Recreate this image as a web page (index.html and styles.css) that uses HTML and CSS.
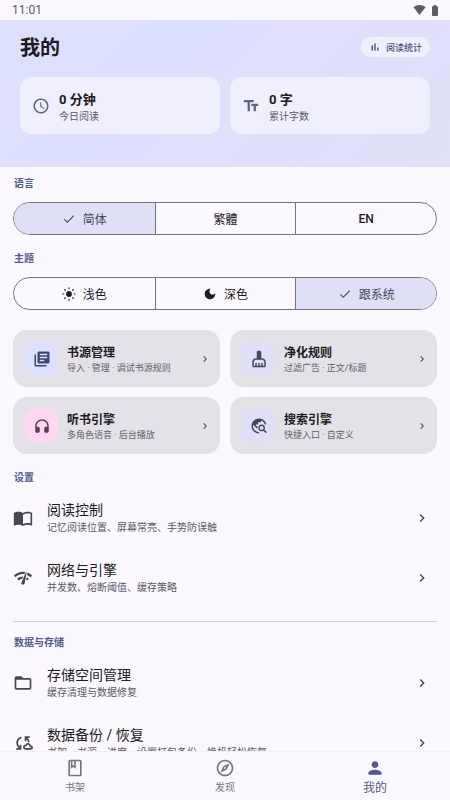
FILE: index.html
```html
<!DOCTYPE html>
<html lang="zh-CN">
<head>
<meta charset="utf-8">
<meta name="viewport" content="width=device-width, initial-scale=1">
<title>我的</title>
<link rel="stylesheet" href="styles.css">
</head>
<body>
<svg class="defs" aria-hidden="true">
  <symbol id="chevron" viewBox="0 0 24 24"><path d="M10 6 8.600 7.400l4.600 4.600-4.600 4.600L10 18l6-6z"/></symbol>
  <symbol id="check" viewBox="0 0 24 24"><path d="M9 16.170 4.830 12l-1.420 1.410L9 19 21 7l-1.410-1.410z"/></symbol>
</svg>
<div class="app">
  <div class="status">
    <span>11:01</span>
    <span class="status-icons">
      <svg class="wifi" viewBox="0 0 24 20"><path d="M12 20 0 4.500C3.500 1.700 7.500 0 12 0s8.500 1.700 12 4.500z"/></svg>
      <svg class="battery" viewBox="0 0 12 22"><path d="M3.500 0h5v2.500h2c.8 0 1.500.7 1.500 1.500v16.500c0 .8-.7 1.500-1.500 1.500h-9C.7 22 0 21.300 0 20.500V4c0-.8.7-1.500 1.500-1.500h2z"/></svg>
    </span>
  </div>

  <main class="content">
    <header class="hero">
      <div class="hero-top">
        <h1>我的</h1>
        <button class="pill" type="button">
          <svg viewBox="0 0 24 24"><path d="M5 9.200h3V19H5zM10.600 5h2.800v14h-2.800zM16.200 13H19v6h-2.800z"/></svg>
          阅读统计
        </button>
      </div>
      <div class="stats">
        <div class="stat">
          <svg viewBox="0 0 24 24"><path d="M11.990 2C6.470 2 2 6.480 2 12s4.470 10 9.990 10C17.520 22 22 17.520 22 12S17.520 2 11.990 2zM12 20c-4.420 0-8-3.580-8-8s3.580-8 8-8 8 3.580 8 8-3.580 8-8 8zm.5-13H11v6l5.250 3.150.75-1.230-4.500-2.670z"/></svg>
          <div><strong>0 分钟</strong><span>今日阅读</span></div>
        </div>
        <div class="stat">
          <svg viewBox="0 0 24 24"><path d="M2.500 4v3h5v12h3V7h5V4h-13zm19 5h-9v3h3v7h3v-7h3V9z"/></svg>
          <div><strong>0 字</strong><span>累计字数</span></div>
        </div>
      </div>
    </header>

    <section class="block">
      <h2>语言</h2>
      <div class="segments">
        <button class="selected" type="button" aria-pressed="true"><svg><use href="#check"/></svg>简体</button>
        <button type="button" lang="zh-TW">繁體</button>
        <button class="latin" type="button">EN</button>
      </div>
    </section>

    <section class="block">
      <h2>主题</h2>
      <div class="segments">
        <button type="button"><svg viewBox="0 0 24 24"><circle cx="12" cy="12" r="5"/><path class="rays" d="M12 1.500v1.500M12 21v1.500M1.500 12H3M21 12h1.500M4.600 4.600l1 1M18.400 18.400l1 1M4.600 19.400l1-1M18.400 5.600l1-1"/></svg>浅色</button>
        <button type="button"><svg viewBox="0 0 24 24"><path d="M12 3c-4.970 0-9 4.030-9 9s4.030 9 9 9 9-4.030 9-9c0-.46-.04-.92-.1-1.360-.98 1.370-2.580 2.260-4.400 2.260-2.980 0-5.400-2.420-5.400-5.400 0-1.810.89-3.420 2.260-4.400-.44-.06-.9-.1-1.360-.1z"/></svg>深色</button>
        <button class="selected" type="button" aria-pressed="true"><svg><use href="#check"/></svg>跟系统</button>
      </div>
    </section>

    <section class="cards">
      <a class="card" href="#">
        <span class="badge indigo"><svg viewBox="0 0 24 24"><path d="M4 6H2v14c0 1.100.9 2 2 2h14v-2H4V6zm16-4H8c-1.100 0-2 .9-2 2v12c0 1.100.9 2 2 2h12c1.100 0 2-.9 2-2V4c0-1.100-.9-2-2-2zm-1 9H9V9h10v2zm-4 4H9v-2h6v2zm4-8H9V5h10v2z"/></svg></span>
        <span class="card-text"><strong>书源管理</strong><span>导入 · 管理 · 调试书源规则</span></span>
        <svg class="chevron"><use href="#chevron"/></svg>
      </a>
      <a class="card" href="#">
        <span class="badge"><svg viewBox="0 0 24 24"><path d="M16 11h-1V3c0-1.100-.9-2-2-2h-2c-1.100 0-2 .9-2 2v8H8c-2.760 0-5 2.240-5 5v5c0 1.100.9 2 2 2h14c1.100 0 2-.9 2-2v-5c0-2.760-2.240-5-5-5zm3 10h-2v-3c0-.55-.45-1-1-1s-1 .45-1 1v3h-2v-3c0-.55-.45-1-1-1s-1 .45-1 1v3H9v-3c0-.55-.45-1-1-1s-1 .45-1 1v3H5v-5c0-1.650 1.350-3 3-3h8c1.650 0 3 1.350 3 3v5z"/></svg></span>
        <span class="card-text"><strong>净化规则</strong><span>过滤广告 · 正文/标题</span></span>
        <svg class="chevron"><use href="#chevron"/></svg>
      </a>
      <a class="card" href="#">
        <span class="badge pink"><svg viewBox="0 0 24 24"><path d="M12 3c-4.970 0-9 4.030-9 9v7c0 1.100.9 2 2 2h2c1.100 0 2-.9 2-2v-4c0-1.100-.9-2-2-2H5v-1c0-3.870 3.130-7 7-7s7 3.130 7 7v1h-2c-1.100 0-2 .9-2 2v4c0 1.100.9 2 2 2h2c1.100 0 2-.9 2-2v-7c0-4.970-4.030-9-9-9z"/></svg></span>
        <span class="card-text"><strong>听书引擎</strong><span>多角色语音 · 后台播放</span></span>
        <svg class="chevron"><use href="#chevron"/></svg>
      </a>
      <a class="card" href="#">
        <span class="badge"><svg viewBox="0 0 24 24"><path d="M19.300 16.900c.4-.7.7-1.500.7-2.400 0-2.500-2-4.500-4.500-4.500S11 12 11 14.500s2 4.500 4.500 4.500c.9 0 1.700-.3 2.400-.7l3.200 3.200 1.400-1.400-3.200-3.200zm-3.800.1c-1.400 0-2.500-1.100-2.500-2.500s1.100-2.500 2.500-2.500 2.500 1.100 2.500 2.500-1.100 2.500-2.500 2.500zM12 20v2C6.480 22 2 17.520 2 12S6.480 2 12 2c4.840 0 8.870 3.440 9.800 8h-2.070c-.64-2.460-2.400-4.470-4.730-5.410V5c0 1.100-.9 2-2 2h-2v2c0 .55-.45 1-1 1H8v2h2v3H9l-4.790-4.790C4.080 10.790 4 11.380 4 12c0 4.410 3.590 8 8 8z"/></svg></span>
        <span class="card-text"><strong>搜索引擎</strong><span>快捷入口 · 自定义</span></span>
        <svg class="chevron"><use href="#chevron"/></svg>
      </a>
    </section>

    <section class="list">
      <h2>设置</h2>
      <a class="row" href="#">
        <svg class="lead" viewBox="0 0 24 24"><path d="M21 5c-1.110-.35-2.330-.5-3.500-.5-1.950 0-4.050.4-5.500 1.500-1.450-1.100-3.550-1.500-5.500-1.500S2.450 4.900 1 6v14.650c0 .25.25.5.5.5.1 0 .15-.05.25-.05C3.100 20.450 5.050 20 6.500 20c1.950 0 4.050.4 5.500 1.500 1.350-.85 3.800-1.500 5.500-1.500 1.650 0 3.350.3 4.750 1.050.1.05.15.05.25.05.25 0 .5-.25.5-.5V6c-.6-.45-1.250-.75-2-1zm0 13.500c-1.100-.35-2.300-.5-3.500-.5-1.700 0-4.150.65-5.500 1.500V8c1.350-.85 3.800-1.500 5.500-1.500 1.200 0 2.400.15 3.500.5v11.500z"/></svg>
        <span class="row-text"><b>阅读控制</b><span>记忆阅读位置、屏幕常亮、手势防误触</span></span>
        <svg class="chevron"><use href="#chevron"/></svg>
      </a>
      <a class="row" href="#">
        <svg class="lead" viewBox="0 0 24 24"><path d="M15.900 5c-.17 0-.32.09-.41.23l-.07.15-5.180 11.650c-.16.29-.26.61-.26.96 0 1.110.9 2.010 2.010 2.010.96 0 1.770-.68 1.960-1.590l.01-.03L16.400 5.500c0-.28-.22-.5-.5-.5zM1 9l2 2c2.880-2.880 6.790-4.080 10.530-3.620l1.190-2.680C9.890 3.840 4.740 5.270 1 9zm20 2l2-2c-1.640-1.640-3.550-2.820-5.590-3.570l-.53 2.820c1.500.62 2.900 1.530 4.120 2.750zm-4 4l2-2c-.8-.8-1.700-1.420-2.660-1.890l-.55 2.920c.42.27.83.59 1.210.97zM5 13l2 2c1.130-1.130 2.560-1.790 4.030-2l1.280-2.880c-2.630-.08-5.300.87-7.310 2.880z"/></svg>
        <span class="row-text"><b>网络与引擎</b><span>并发数、熔断阈值、缓存策略</span></span>
        <svg class="chevron"><use href="#chevron"/></svg>
      </a>
    </section>

    <section class="list divided">
      <h2>数据与存储</h2>
      <a class="row" href="#">
        <svg class="lead" viewBox="0 0 24 24"><path d="M20 6h-8l-2-2H4c-1.100 0-1.990.9-1.990 2L2 18c0 1.100.9 2 2 2h16c1.100 0 2-.9 2-2V8c0-1.100-.9-2-2-2zm0 12H4V8h16v10z"/></svg>
        <span class="row-text"><b>存储空间管理</b><span>缓存清理与数据修复</span></span>
        <svg class="chevron"><use href="#chevron"/></svg>
      </a>
      <a class="row" href="#">
        <svg class="lead" viewBox="0 0 24 24"><path d="M21.500 14.980c-.02 0-.03 0-.05.010C21.200 13.300 19.760 12 18 12c-1.400 0-2.600.83-3.160 2.020C13.260 14.100 12 15.400 12 17c0 1.660 1.340 3 3 3l6.500-.02c1.380 0 2.500-1.120 2.500-2.500s-1.120-2.500-2.500-2.500zm.01 3.020H15c-.55 0-1-.45-1-1s.45-1 1-1h1.250v-.25c0-.97.78-1.750 1.750-1.750s1.750.78 1.750 1.750V17h1.760c.28 0 .5.220.5.500-.01.280-.23.500-.5.500zM10 4.260v2.090C7.670 7.180 6 9.390 6 12c0 1.770.78 3.340 2 4.440V14h2v6H4v-2h2.730C5.060 16.540 4 14.400 4 12c0-3.730 2.550-6.850 6-7.740zM20 6h-2.730c1.430 1.260 2.410 3.010 2.660 5h-2.020c-.23-1.360-.93-2.550-1.910-3.440V10h-2V4h6v2z"/></svg>
        <span class="row-text"><b>数据备份 / 恢复</b><span>书架、书源、进度、设置打包备份，换机轻松恢复</span></span>
        <svg class="chevron"><use href="#chevron"/></svg>
      </a>
    </section>
  </main>

  <nav class="tabs">
    <a href="#"><svg viewBox="0 0 24 24"><path d="M18 2H6c-1.100 0-2 .9-2 2v16c0 1.100.9 2 2 2h12c1.100 0 2-.9 2-2V4c0-1.100-.9-2-2-2zM9 4h2v5l-1-.75L9 9V4zm9 16H6V4h1v9l3-2.250L13 13V4h5v16z"/></svg>书架</a>
    <a href="#"><svg viewBox="0 0 24 24"><path d="M12 2C6.480 2 2 6.480 2 12s4.480 10 10 10 10-4.480 10-10S17.520 2 12 2zm0 18c-4.410 0-8-3.590-8-8s3.590-8 8-8 8 3.590 8 8-3.590 8-8 8zm-5.500-2.500 7.510-3.490L17.500 6.500 9.990 9.990 6.500 17.500zm5.500-6.600c.61 0 1.100.49 1.100 1.100s-.49 1.100-1.100 1.100-1.100-.49-1.100-1.100.49-1.100 1.100-1.100z"/></svg>发现</a>
    <a class="current" href="#" aria-current="page"><svg viewBox="0 0 24 24"><path d="M12 12c2.210 0 4-1.790 4-4s-1.790-4-4-4-4 1.790-4 4 1.790 4 4 4zm0 2c-2.670 0-8 1.340-8 4v1c0 .55.45 1 1 1h14c.55 0 1-.45 1-1v-1c0-2.660-5.330-4-8-4z"/></svg>我的</a>
  </nav>
</div>
</body>
</html>
```
FILE: styles.css
```css
* {
  box-sizing: border-box;
}

body {
  margin: 0;
  background: #fbf8ff;
  color: #1b1b21;
  font-family: Roboto, "Noto Sans CJK SC", sans-serif;
  font-size: 12px;
}

h1, h2 {
  margin: 0;
}

svg {
  display: block;
  flex: none;
  fill: currentColor;
}

a {
  color: inherit;
  text-decoration: none;
}

button {
  border: 0;
  background: none;
  color: inherit;
  font: inherit;
}

.defs {
  display: none;
}

.app {
  display: flex;
  flex-direction: column;
  height: 100vh;
}

.status {
  display: flex;
  flex: none;
  align-items: center;
  justify-content: space-between;
  height: 20px;
  padding: 0 12px;
  color: #5f5e63;
}

.status-icons {
  display: flex;
  align-items: center;
  gap: 6px;
}

.wifi {
  width: 13px;
  height: 10px;
}

.battery {
  width: 6px;
  height: 11px;
}

.content {
  flex: 1;
  min-height: 0;
  overflow: hidden;
}

.hero {
  padding: 12px 20px 33px;
  background: linear-gradient(135deg, #dde0ff, #dee0fc 60%, #e0e0f6);
}

.hero-top {
  display: flex;
  align-items: center;
  justify-content: space-between;
  margin-bottom: 15px;
}

h1 {
  padding-top: 2px;
  font-size: 20px;
  line-height: 28px;
}

.pill {
  display: flex;
  align-items: center;
  gap: 5px;
  height: 20px;
  padding: 0 8px;
  border-radius: 10px;
  background: #f0effd;
  color: #46527f;
  font-size: 9px;
  font-weight: 500;
}

.pill svg {
  width: 12px;
  height: 12px;
}

.stats {
  display: grid;
  grid-template-columns: 1fr 1fr;
  gap: 10px;
}

.stat {
  display: flex;
  align-items: center;
  gap: 9px;
  height: 57px;
  padding: 0 12px;
  border-radius: 12px;
  background: #f0effd;
}

.stat svg {
  width: 18px;
  height: 18px;
  color: #5b6386;
}

.stat strong,
.stat span {
  display: block;
}

.stat strong {
  padding-top: 3px;
  font-size: 13px;
  line-height: 18px;
}

.stat span {
  color: #5b5b66;
  font-size: 10px;
  line-height: 15px;
}

.block {
  padding: 9px 13px 0;
}

.block + .block {
  padding-top: 16px;
}

h2 {
  padding-left: 1px;
  color: #535d8c;
  font-size: 10px;
  line-height: 16px;
}

.segments {
  display: grid;
  grid-template-columns: repeat(3, 1fr);
  height: 33px;
  margin-top: 10px;
  overflow: hidden;
  border: 1px solid #777680;
  border-radius: 17px;
}

.segments button {
  display: flex;
  align-items: center;
  justify-content: center;
  gap: 7px;
  padding: 0;
}

.segments button + button {
  border-left: 1px solid #777680;
}

.segments svg {
  width: 14px;
  height: 14px;
}

.segments .selected {
  background: #dfe0f8;
  color: #444659;
}

.segments .latin {
  font-weight: 500;
}

.rays {
  fill: none;
  stroke: currentColor;
  stroke-linecap: round;
  stroke-width: 2;
}

.cards {
  display: grid;
  grid-template-columns: 1fr 1fr;
  gap: 10px;
  padding: 20px 13px 0;
}

.card {
  display: flex;
  align-items: center;
  height: 57px;
  padding: 0 9px 0 12px;
  border-radius: 14px;
  background: #e4e1e8;
}

.badge {
  display: grid;
  place-items: center;
  width: 33px;
  height: 33px;
  margin-right: 9px;
  border-radius: 9px;
  background: #dfe0f8;
  color: #444659;
}

.badge svg {
  width: 18px;
  height: 18px;
}

.indigo {
  background: #dde1ff;
  color: #3b4673;
}

.pink {
  background: #ffd7f0;
  color: #5c3d55;
}

.card-text,
.row-text {
  flex: 1;
  min-width: 0;
  white-space: nowrap;
}

.card-text > *,
.row-text > * {
  display: block;
}

.card-text strong {
  padding-top: 2px;
  line-height: 16px;
}

.card-text span {
  color: #62616a;
  font-size: 9px;
  line-height: 14px;
}

.chevron {
  width: 12px;
  height: 12px;
  color: #46464f;
}

.list {
  padding: 16px 13px 0;
}

.divided {
  margin: 13px 13px 0;
  padding: 13px 0 0;
  border-top: 1px solid #cfcdd8;
}

.row {
  display: flex;
  align-items: center;
  gap: 14px;
  height: 60px;
  padding-right: 7px;
}

.row:first-of-type {
  margin-top: 2px;
}

.lead {
  width: 20px;
  height: 20px;
  color: #46464f;
}

.row-text {
  padding-bottom: 2px;
}

.row-text b {
  font-size: 14px;
  font-weight: 400;
  line-height: 20px;
}

.row-text span {
  color: #5b5b64;
  font-size: 10px;
  line-height: 15px;
}

.row .chevron {
  width: 16px;
  height: 16px;
}

.tabs {
  display: grid;
  flex: none;
  grid-template-columns: repeat(3, 1fr);
  height: 49px;
  border-top: 1px solid #f2eff6;
  background: #fbf8ff;
}

.tabs a {
  display: flex;
  flex-direction: column;
  align-items: center;
  gap: 1px;
  padding-top: 6px;
  color: #77767d;
  font-size: 10px;
  line-height: 18px;
}

.tabs svg {
  width: 20px;
  height: 20px;
}

.tabs .current {
  color: #4f5b8c;
  font-size: 12px;
}
```
